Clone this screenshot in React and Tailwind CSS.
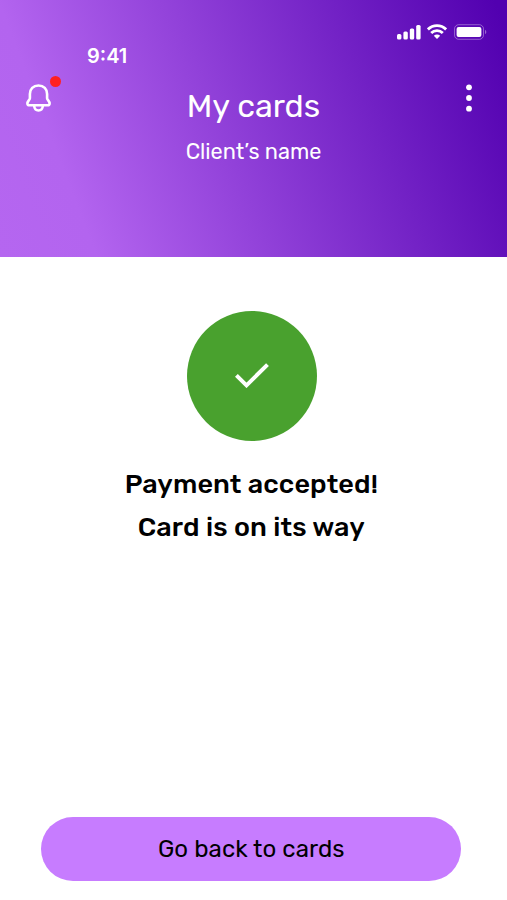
function SignalIcon() {
  return (
    <svg className="h-4 w-6" viewBox="0 0 24 16" fill="#fff">
      <rect x="0" y="10" width="4.4" height="5.4" rx="1.5" />
      <rect x="6.4" y="7.6" width="4.4" height="7.8" rx="1.5" />
      <rect x="12.8" y="4.4" width="4.4" height="11" rx="1.5" />
      <rect x="19.2" y="1" width="4.4" height="14.4" rx="1.5" />
    </svg>
  );
}

function WifiIcon() {
  return (
    <svg className="ml-1.5 h-4 w-5" viewBox="0 0 20 16" fill="none" stroke="#fff" strokeWidth="2.8">
      <path d="M0.9 5.4C6 0.4 14 0.4 19.1 5.4" />
      <path d="M4.2 9.1C7.4 5.9 12.6 5.9 15.8 9.1" />
      <path d="M6.8 11.8C8.6 10 11.4 10 13.2 11.8L10 15Z" fill="#fff" stroke="none" />
    </svg>
  );
}

function BatteryIcon() {
  return (
    <svg className="ml-[7px] h-4 w-[33px]" viewBox="0 0 33 16" fill="none">
      <rect x="0.5" y="0.7" width="29" height="14.6" rx="4.2" stroke="#fff" strokeOpacity="0.35" />
      <rect x="2.6" y="2.9" width="24.8" height="10.2" rx="2" fill="#fff" />
      <path d="M31 5.8C32.8 6.5 32.8 9.5 31 10.2Z" fill="#fff" fillOpacity="0.4" />
    </svg>
  );
}

function BellIcon() {
  return (
    <svg className="h-7 w-[25px]" viewBox="0 0 25 28" fill="none" stroke="#fff" strokeWidth="2.6" strokeLinejoin="round" strokeLinecap="round">
      <path d="M12.5 1.5C7.2 1.5 3.9 5.2 3.9 10V14.2C3.9 15.8 1.4 17.2 1.4 19.4C1.4 20.7 2.2 21.2 3.4 21.2H21.6C22.8 21.2 23.6 20.7 23.6 19.4C23.6 17.2 21.1 15.8 21.1 14.2V10C21.1 5.2 17.8 1.5 12.5 1.5Z" />
      <path d="M8.2 22C8.4 24.8 10 26.5 12.5 26.5S16.6 24.8 16.8 22" />
    </svg>
  );
}

export default function App() {
  return (
    <div className="flex h-[900px] w-[507px] flex-col overflow-hidden bg-white font-['Rubik','Roboto',sans-serif] text-black">
      <header className="flex h-[257px] shrink-0 flex-col bg-[linear-gradient(69deg,#b566f0_0%,#b364ef_16%,#5200b0_98%)] text-white">
        <div className="flex h-[46px] items-center justify-end pt-[18px] pr-5">
          <SignalIcon />
          <WifiIcon />
          <BatteryIcon />
        </div>
        <div className="flex h-5 items-center pl-[87px]">
          <span className="font-['Inter',sans-serif] text-[20px] leading-5 font-semibold">9:41</span>
        </div>
        <div className="grid grid-cols-[25px_1fr_25px] items-start pr-[26px] pl-[26px]">
          <button className="relative mt-[18px] w-[25px]" aria-label="Notifications">
            <BellIcon />
            <span className="absolute -top-2 left-[23.5px] size-[11px] rounded-full bg-[#ff2020]" />
          </button>
          <div className="mt-[20px] flex flex-col items-center whitespace-nowrap">
            <h1 className="text-[32.2px] leading-10">My cards</h1>
            <p className="mt-3 text-[21.7px] leading-7">Client’s name</p>
          </div>
          <button className="mt-[18px] ml-[10px]" aria-label="More">
            <svg className="h-7 w-1.5" viewBox="0 0 6 28" fill="#fff">
              <circle cx="3" cy="3.3" r="2.9" />
              <circle cx="3" cy="14" r="2.9" />
              <circle cx="3" cy="24.7" r="2.9" />
            </svg>
          </button>
        </div>
      </header>
      <main className="flex grow flex-col items-center pr-[4.4px]">
        <div className="mt-[54px] ml-px flex size-[129.5px] items-center justify-center rounded-full bg-[#49a12e]">
          <svg className="h-[25px] w-[34px]" viewBox="0 0 34 25" fill="none" stroke="#fff" strokeWidth="4">
            <path d="M1.4 12.3L11.5 22.3L32.5 1.6" />
          </svg>
        </div>
        <h2 className="mt-[22.5px] text-center text-[27px] leading-[43px] font-medium tracking-[0.1px] whitespace-nowrap">
          <span className="block">Payment accepted!</span>
          <span className="block">Card is on its way</span>
        </h2>
        <button className="mt-auto mb-[18.7px] h-[64.5px] w-[420px] rounded-full bg-[#c77cff] text-[24px] tracking-[0.1px]">
          Go back to cards
        </button>
      </main>
    </div>
  );
}
